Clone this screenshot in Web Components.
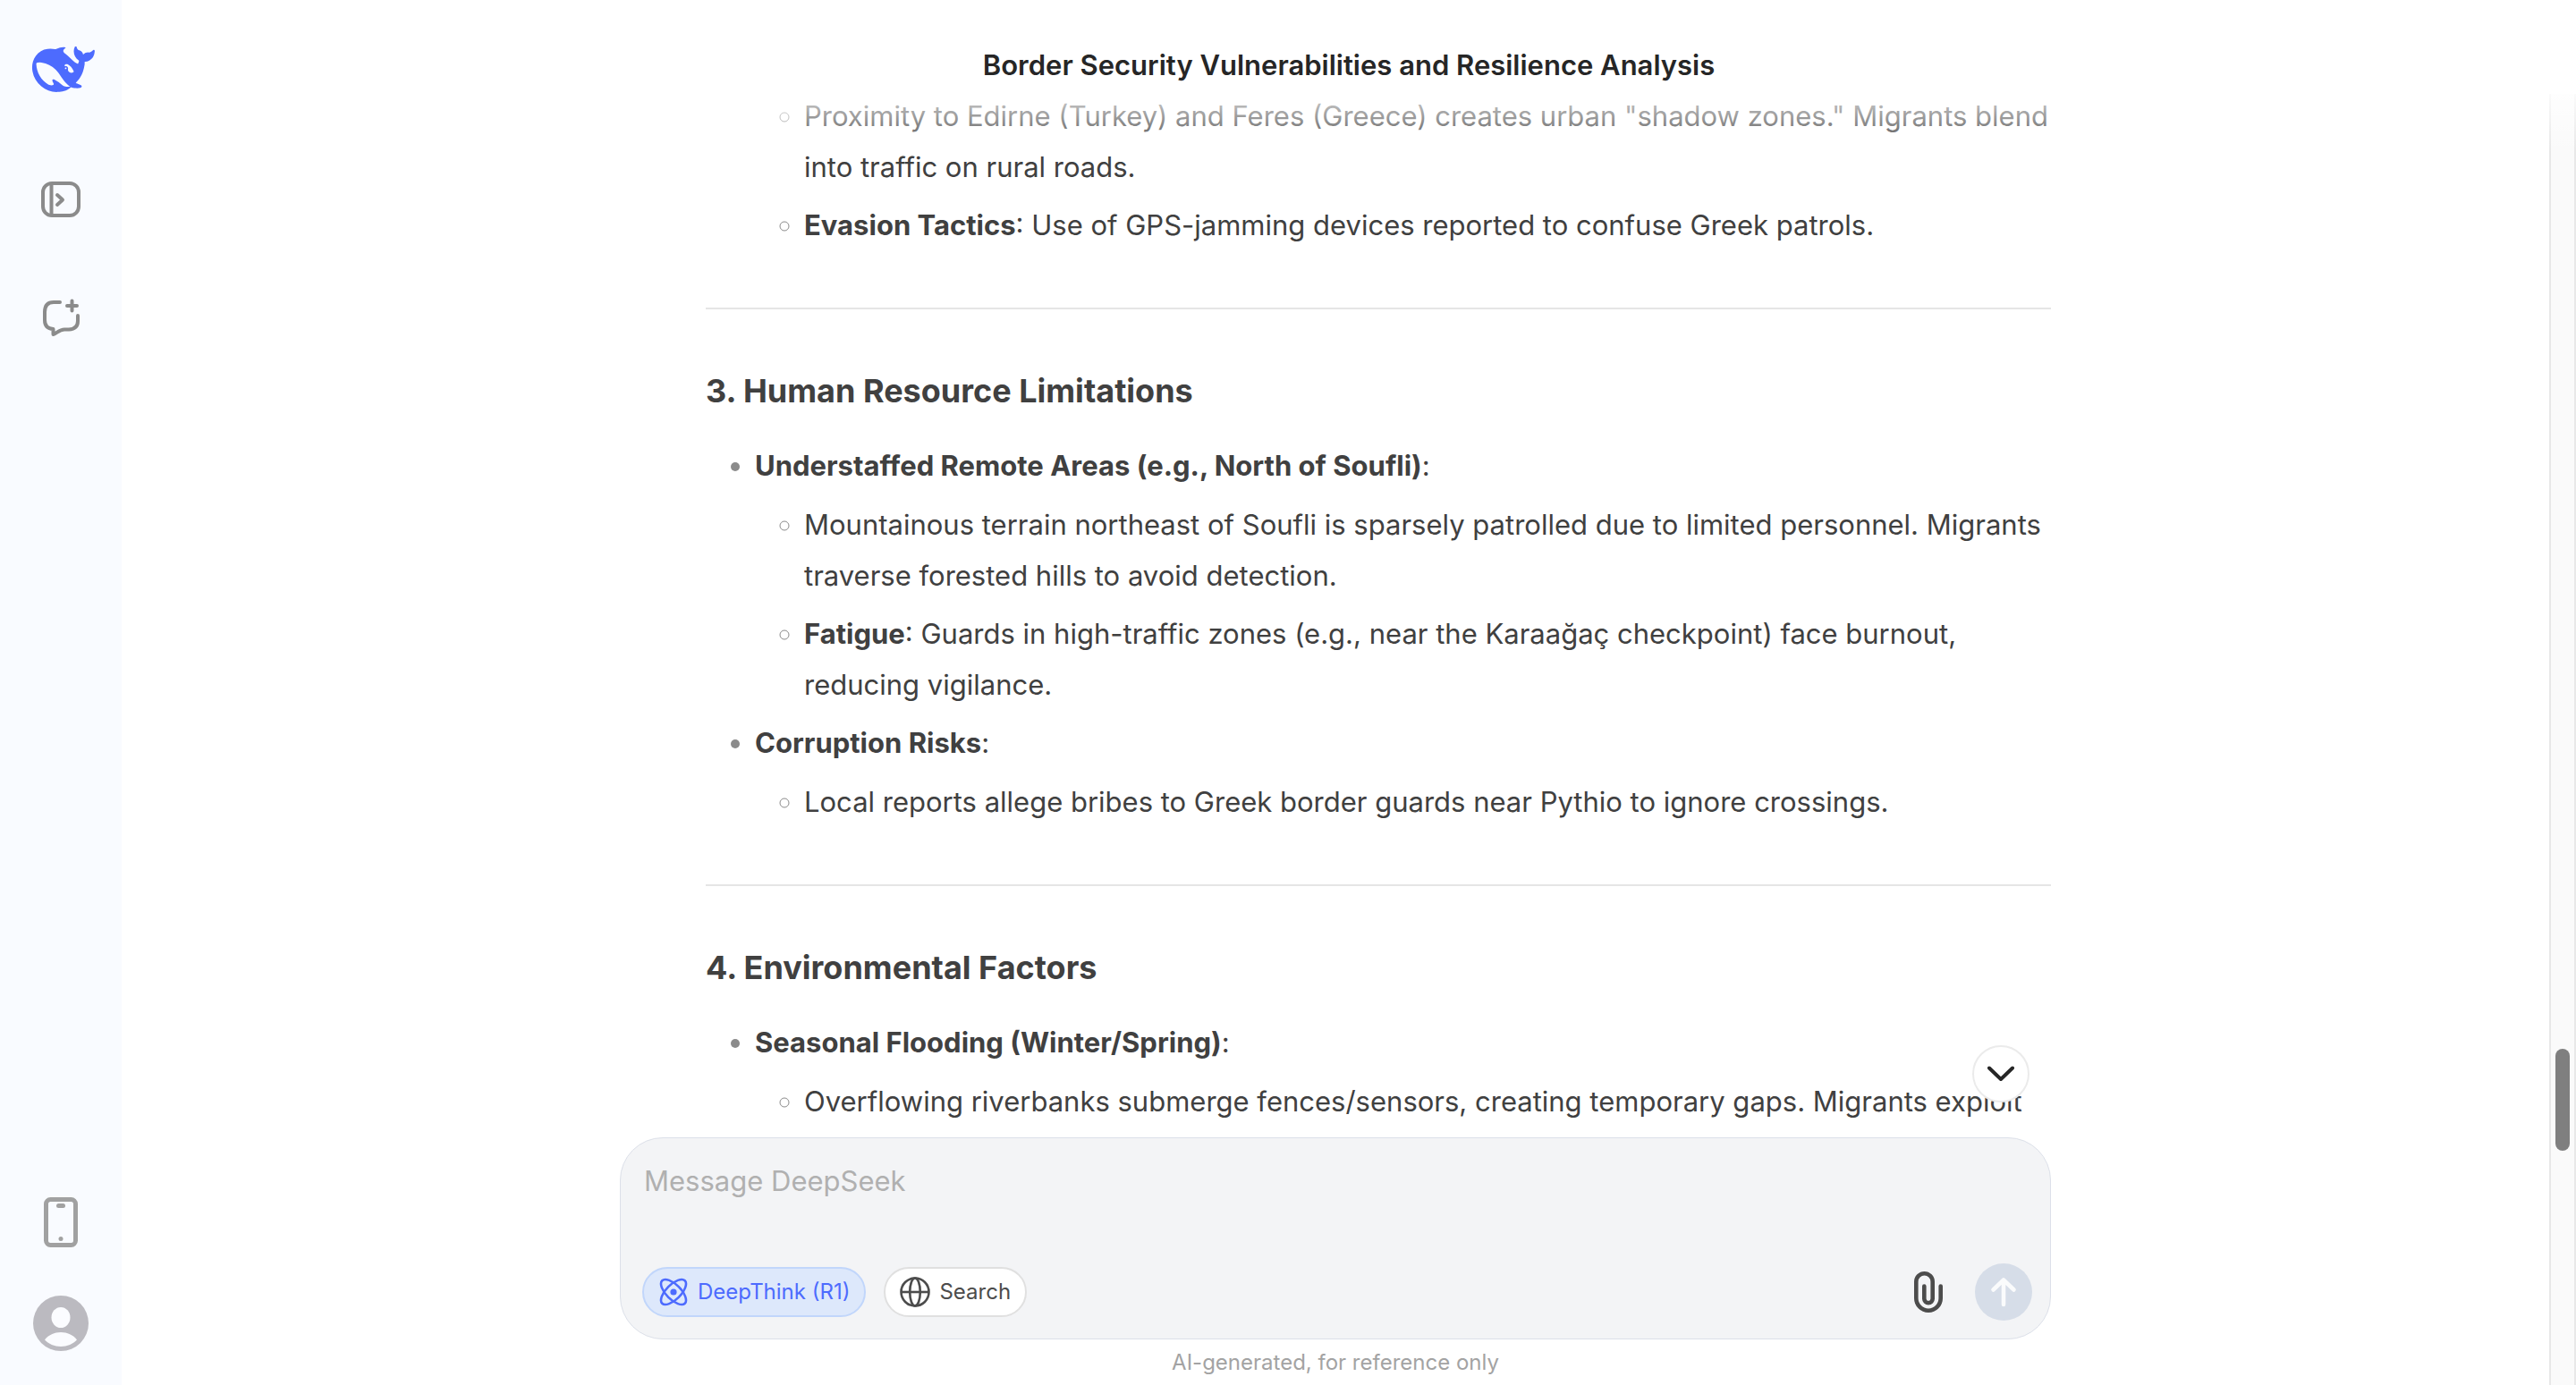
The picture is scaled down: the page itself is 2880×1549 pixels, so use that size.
<!DOCTYPE html>
<html lang="en">
<head>
<meta charset="utf-8">
<title>Border Security Vulnerabilities and Resilience Analysis</title>
<style>
  html, body { height: 100%; margin: 0; }
  body {
    background: #fff;
    color: #404040;
    font-family: Inter, "Liberation Sans", sans-serif;
    font-size: 31px;
    line-height: 57px;
    overflow: hidden;
  }
</style>
</head>
<body>
<chat-app></chat-app>
<script>
const define = (name, html) => {
  const template = document.createElement('template');
  template.innerHTML = html;
  customElements.define(name, class extends HTMLElement {
    constructor() {
      super();
      this.attachShadow({ mode: 'open' }).append(template.content.cloneNode(true));
    }
  });
};

define('side-nav', `
<style>
  :host { display: flex; flex-direction: column; align-items: center; box-sizing: border-box; width: 136px; padding: 52px 0 37px; background: #f9fbff; }
  a { display: block; width: 76px; height: 51px; margin-bottom: 88px; color: #4d6bfe; }
  nav, footer { display: flex; flex-direction: column; }
  nav { gap: 68px; }
  footer { gap: 49px; margin-top: auto; }
  button { display: grid; place-items: center; width: 64px; height: 64px; padding: 0; border: 0; background: none; color: #8b8b8b; }
  svg { display: block; }
</style>
<a href="#" aria-label="DeepSeek">
  <svg width="76" height="51" viewBox="-2 3.2 26 17.5" fill="currentColor"><path d="M23.748 4.482c-.254-.124-.364.113-.512.234-.051.039-.094.09-.137.136-.372.397-.806.657-1.373.626-.829-.046-1.537.214-2.163.848-.133-.782-.575-1.248-1.247-1.548-.352-.156-.708-.311-.955-.65-.172-.241-.219-.51-.305-.774-.055-.16-.11-.323-.293-.35-.2-.031-.278.136-.356.276-.313.572-.434 1.202-.422 1.84.027 1.436.633 2.58 1.838 3.393.137.093.172.187.129.323-.082.28-.18.552-.266.833-.055.179-.137.217-.329.14a5.526 5.526 0 01-1.736-1.18c-.857-.828-1.631-1.742-2.597-2.458a11.365 11.365 0 00-.689-.471c-.985-.957.13-1.743.388-1.836.27-.098.093-.432-.779-.428-.872.004-1.67.295-2.687.684a3.055 3.055 0 01-.465.137 9.597 9.597 0 00-2.883-.102c-1.885.21-3.39 1.102-4.497 2.623C.082 8.606-.231 10.684.152 12.85c.403 2.284 1.569 4.175 3.36 5.653 1.858 1.533 3.997 2.284 6.438 2.14 1.482-.085 3.133-.284 4.994-1.86.47.234.962.327 1.78.397.63.059 1.236-.03 1.705-.128.735-.156.684-.837.419-.961-2.155-1.004-1.682-.595-2.113-.926 1.096-1.296 2.746-2.642 3.392-7.003.05-.347.007-.565 0-.845-.004-.17.035-.237.23-.256a4.173 4.173 0 001.545-.475c1.396-.763 1.96-2.015 2.093-3.517.02-.23-.004-.467-.247-.588zM11.581 18c-2.089-1.642-3.102-2.183-3.52-2.16-.392.024-.321.471-.235.763.09.288.207.486.371.739.114.167.192.416-.113.603-.673.416-1.842-.14-1.897-.167-1.361-.802-2.5-1.86-3.301-3.307-.774-1.393-1.224-2.887-1.298-4.482-.02-.386.093-.522.477-.592a4.696 4.696 0 011.529-.039c2.132.312 3.946 1.265 5.468 2.774.868.86 1.525 1.887 2.202 2.891.72 1.066 1.494 2.082 2.48 2.914.348.292.625.514.891.677-.802.09-2.14.11-3.054-.614zm1-6.44a.306.306 0 01.415-.287.302.302 0 01.2.288.306.306 0 01-.31.307.303.303 0 01-.304-.308zm3.11 1.596c-.2.081-.399.151-.59.16a1.245 1.245 0 01-.798-.254c-.274-.23-.47-.358-.552-.758a1.73 1.73 0 01.016-.588c.07-.327-.008-.537-.239-.727-.187-.156-.426-.199-.688-.199a.559.559 0 01-.254-.078c-.11-.054-.2-.19-.114-.358.028-.054.16-.186.192-.21.356-.202.767-.136 1.146.016.352.144.618.408 1.001.782.391.451.462.576.685.914.176.265.336.537.445.848.067.195-.019.354-.25.452z"/></svg>
</a>
<nav>
  <button aria-label="Open sidebar">
    <svg width="44" height="40" viewBox="0 0 44 40" fill="none" stroke="currentColor" stroke-width="4" stroke-linecap="round" stroke-linejoin="round"><rect x="2" y="2" width="40" height="36" rx="10"/><path d="M11.500 3v34" stroke-linecap="butt"/><path d="M18 15l6 5.500-6 5.500"/></svg>
  </button>
  <button aria-label="New chat">
    <svg width="44" height="44" viewBox="0 0 44 44" fill="none" stroke="currentColor" stroke-width="4" stroke-linecap="round" stroke-linejoin="round"><path d="M21 5H14Q4 5 4 16V25Q4 34.500 13.500 35V41C17.500 40 20 35.500 26 35.500H31Q41 35 41 26V20"/><path d="M34.500 3.500v11M29 9h11" /></svg>
  </button>
</nav>
<footer>
  <button aria-label="Get the app">
    <svg width="38" height="56" viewBox="0 0 38 56" fill="none" stroke="#a1a1a1" stroke-width="5"><rect x="2.500" y="2.500" width="33" height="51" rx="5"/><path d="M16.500 9.500h5" stroke-linecap="round"/><circle cx="19" cy="46.500" r="2.500" fill="#a1a1a1" stroke="none"/></svg>
  </button>
  <button aria-label="Profile">
    <svg width="62" height="62" viewBox="0 0 62 62"><circle cx="31" cy="31" r="31" fill="#bbbac0"/><ellipse cx="31" cy="24.500" rx="10.500" ry="11.500" fill="#fbfcff"/><path d="M13 49.500C17 44 24 41 31 41s14 3 18 8.500C45 54 38 57 31 57s-14-3-18-7.500z" fill="#fbfcff"/></svg>
  </button>
</footer>`);

define('chat-header', `
<style>
  :host { display: block; padding: 49px 40px 4px; text-align: center; color: #262626; }
  h1 { margin: 0; font-size: 31px; line-height: 48px; font-weight: 600; }
</style>
<h1><slot></slot></h1>`);

define('chat-message', `
<style>
  :host { display: block; box-sizing: border-box; padding-left: 96px; }
  ul { margin: 0; padding-left: 55px; list-style: disc; }
  ul ul { margin-top: 9px; list-style: circle; }
  li + li { margin-top: 8px; }
  li::marker { color: #8b8b8b; }
  hr { height: 2px; margin: 64px 0; border: 0; background: #e5e5e5; }
  h3 { margin: 0 0 28px; font-size: 36px; line-height: 54px; font-weight: 650; }
  strong { font-weight: 700; }
  .nested { padding-left: 55px; }
  .nested ul { list-style: circle; }
</style>
<div class="nested"><ul>
  <li>Proximity to Edirne (Turkey) and Feres (Greece) creates urban "shadow zones." Migrants blend into traffic on rural roads.</li>
  <li><strong>Evasion Tactics</strong>: Use of GPS-jamming devices reported to confuse Greek patrols.</li>
</ul></div>
<hr>
<h3>3. Human Resource Limitations</h3>
<ul>
  <li><strong>Understaffed Remote Areas (e.g., North of Soufli)</strong>:
    <ul>
      <li>Mountainous terrain northeast of Soufli is sparsely patrolled due to limited personnel. Migrants traverse forested hills to avoid detection.</li>
      <li><strong>Fatigue</strong>: Guards in high-traffic zones (e.g., near the Karaağaç checkpoint) face burnout, reducing vigilance.</li>
    </ul>
  </li>
  <li><strong>Corruption Risks</strong>:
    <ul>
      <li>Local reports allege bribes to Greek border guards near Pythio to ignore crossings.</li>
    </ul>
  </li>
</ul>
<hr>
<h3>4. Environmental Factors</h3>
<ul>
  <li><strong>Seasonal Flooding (Winter/Spring)</strong>:
    <ul>
      <li>Overflowing riverbanks submerge fences/sensors, creating temporary gaps. Migrants exploit</li>
    </ul>
  </li>
</ul>`);

define('mode-toggle', `
<style>
  :host { display: block; --fg: #4c4c4c; --bg: #fff; --line: #e0e0e0; }
  :host([active]) { --fg: #4d6bfe; --bg: #dde8fb; --line: #c1d6fb; }
  button { display: flex; align-items: center; gap: 10px; height: 56px; padding: 0 16px; border: 2px solid var(--line); border-radius: 28px; background: var(--bg); color: var(--fg); font: inherit; font-size: 24px; line-height: 32px; white-space: nowrap; }
</style>
<button><slot name="icon"></slot><slot></slot></button>`);

define('chat-composer', `
<style>
  :host { display: flex; flex-direction: column; justify-content: space-between; box-sizing: border-box; min-height: 226px; padding: 28px 20px 20px 24px; border: 1px solid #dce0e9; border-radius: 48px; background: #f3f4f6; }
  textarea { display: block; box-sizing: border-box; width: 100%; height: 80px; padding: 0 2px; border: 0; outline: 0; resize: none; background: none; color: #404040; font: inherit; line-height: 40px; }
  textarea::placeholder { color: #b0b0b0; opacity: 1; }
  .row { display: flex; align-items: center; gap: 20px; }
  .spacer { flex: 1; }
  .round { display: grid; place-items: center; width: 64px; height: 64px; padding: 0; border: 0; border-radius: 50%; background: none; color: #4c4c4c; }
  .send { background: #d6dde8; color: #fafbfc; }
  svg { display: block; }
</style>
<textarea aria-label="Message DeepSeek" placeholder="Message DeepSeek"></textarea>
<div class="row">
  <mode-toggle active>
    <svg slot="icon" width="34" height="34" viewBox="0 0 34 34" fill="none" stroke="currentColor" stroke-width="2.600"><ellipse cx="17" cy="17" rx="8.200" ry="18" transform="rotate(45 17 17)"/><ellipse cx="17" cy="17" rx="8.200" ry="18" transform="rotate(-45 17 17)"/><circle cx="17" cy="17" r="3.600" fill="currentColor" stroke="none"/></svg>
    DeepThink (R1)
  </mode-toggle>
  <mode-toggle>
    <svg slot="icon" width="34" height="34" viewBox="0 0 34 34" fill="none" stroke="currentColor" stroke-width="2.600"><circle cx="17" cy="17" r="15.500"/><ellipse cx="17" cy="17" rx="5.800" ry="15.500"/><path d="M2 17h30"/></svg>
    Search
  </mode-toggle>
  <span class="spacer"></span>
  <button class="round" aria-label="Attach file">
    <svg width="32" height="46" viewBox="0 0 32 46" fill="none" stroke="currentColor" stroke-width="4.600" stroke-linecap="round"><path d="M29.700 16.500V30a13.700 13.700 0 01-27.400 0V11.500a9.200 9.200 0 0118.400 0V30.500a4.700 4.700 0 01-9.400 0V16.500"/></svg>
  </button>
  <button class="round send" aria-label="Send">
    <svg width="32" height="36" viewBox="0 0 32 36" fill="none" stroke="currentColor" stroke-width="4.600" stroke-linecap="round" stroke-linejoin="round"><path d="M16 32V4.500M4.500 15.500L16 4.500l11.500 11"/></svg>
  </button>
</div>`);

define('scroll-track', `
<style>
  :host { display: flex; flex-direction: column; align-items: center; box-sizing: border-box; width: 30px; border: solid #e8e8e8; border-width: 0 2px; background: #fafafa; }
  .before { flex: 1072; }
  .thumb { width: 16px; height: 114px; border-radius: 8px; background: #7f7f7f; }
  .after { flex: 262; }
</style>
<div class="before"></div><div class="thumb"></div><div class="after"></div>`);

define('chat-app', `
<style>
  :host { display: flex; height: 100vh; }
  main { flex: 1; display: flex; flex-direction: column; min-width: 0; }
  .body { flex: 1; display: flex; min-height: 0; position: relative; }
  .fade { position: absolute; inset: 0 0 auto; height: 70px; pointer-events: none; background: linear-gradient(#fff 4px, #ffffffc8 4px, #fff0); }
  .column { flex: 1; display: flex; flex-direction: column; align-items: center; min-width: 0; }
  .column > * { width: 100%; max-width: 1600px; }
  .view { flex: 1; min-height: 0; position: relative; }
  .clip { height: 100%; overflow: hidden; }
  .down { position: absolute; right: 24px; bottom: 39px; display: grid; place-items: center; box-sizing: border-box; width: 64px; height: 64px; padding: 0; border: 2px solid #ebebeb; border-radius: 50%; background: #fff; color: #262626; }
  .note { margin: 0; text-align: center; color: #a3a3a3; font-size: 24px; line-height: 51px; }
</style>
<side-nav></side-nav>
<main>
  <chat-header>Border Security Vulnerabilities and Resilience Analysis</chat-header>
  <div class="body">
    <div class="column">
      <div class="view">
        <div class="clip"><chat-message></chat-message></div>
        <button class="down" aria-label="Scroll to bottom">
          <svg width="30" height="18" viewBox="0 0 30 18" fill="none" stroke="currentColor" stroke-width="4" stroke-linecap="round" stroke-linejoin="round"><path d="M2 2.500l13 12.500L28 2.500"/></svg>
        </button>
      </div>
      <chat-composer></chat-composer>
      <p class="note">AI-generated, for reference only</p>
    </div>
    <scroll-track></scroll-track>
    <div class="fade"></div>
  </div>
</main>`);
</script>
</body>
</html>
